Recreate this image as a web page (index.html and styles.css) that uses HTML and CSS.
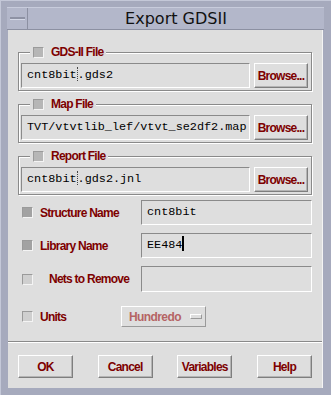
FILE: index.html
```html
<!DOCTYPE html>
<html lang="en">
<head>
  <meta charset="UTF-8">
  <title>Export GDSII</title>
  <link rel="stylesheet" href="styles.css">
</head>
<body>
  <div class="window">
    <!-- Title bar -->
    <div class="titlebar">
      <div class="menu-btn"><span class="bar"></span></div>
      <div class="title">Export GDSII</div>
    </div>

    <div class="content">
      <!-- File groups -->
      <fieldset class="group">
        <legend><span class="check"></span><span class="label">GDS-II File</span></legend>
        <div class="file-row">
          <div class="field">cnt8bit<span class="caret-dim"></span>.gds2</div>
          <button class="btn">Browse...</button>
        </div>
      </fieldset>
      <fieldset class="group">
        <legend><span class="check"></span><span class="label">Map File</span></legend>
        <div class="file-row">
          <div class="field">TVT/vtvtlib_lef/vtvt_se2df2.map</div>
          <button class="btn">Browse...</button>
        </div>
      </fieldset>
      <fieldset class="group">
        <legend><span class="check"></span><span class="label">Report File</span></legend>
        <div class="file-row">
          <div class="field">cnt8bit<span class="caret-dim"></span>.gds2.jnl</div>
          <button class="btn">Browse...</button>
        </div>
      </fieldset>

      <!-- Options -->
      <div class="rows">
        <div class="row">
          <span class="check on"></span>
          <span class="label">Structure Name</span>
          <div class="field">cnt8bit</div>
        </div>
        <div class="row">
          <span class="check on"></span>
          <span class="label">Library Name</span>
          <div class="field">EE484<span class="caret"></span></div>
        </div>
        <div class="row tall">
          <span class="check off"></span>
          <span class="label indent">Nets to Remove</span>
          <div class="field"></div>
        </div>
        <div class="units-row">
          <span class="check off"></span>
          <span class="label">Units</span>
          <div class="option-menu"><span class="option-text">Hundredo</span><span class="option-mark"></span></div>
        </div>
      </div>

      <div class="separator"></div>

      <div class="actions">
        <button class="btn action">OK</button>
        <button class="btn action">Cancel</button>
        <button class="btn action">Variables</button>
        <button class="btn action">Help</button>
      </div>
    </div>
  </div>
</body>
</html>
```

FILE: styles.css
```css
:root {
  --frame: #a6aabd;
  --title-bg: #b3b7ca;
  --panel: #dedede;
  --dark: #8a8a8a;
  --light: #ffffff;
  --label: #7d0000;
}
* { box-sizing: border-box; }
body {
  margin: 0;
  background: var(--frame);
}
.window {
  width: 331px;
  height: 395px;
  padding: 6px 8px 7px 7px;
  background: var(--frame);
  border-top: 1px solid #c4c8d8;
  border-left: 1px solid #c4c8d8;
  display: flex;
  flex-direction: column;
}

/* title bar */
.titlebar {
  height: 23px;
  display: flex;
  background: var(--title-bg);
  border-top: 1px solid #c8ccdc;
  border-bottom: 1px solid #8c90a2;
  margin-left: -1px;
  margin-right: -1px;
}
.menu-btn {
  width: 21px;
  border-right: 1px solid #8c90a2;
  display: flex;
  align-items: center;
  justify-content: center;
}
.menu-btn .bar {
  width: 15px;
  height: 3px;
  background: #8e92a4;
  border-bottom: 1px solid #d4d8e6;
}
.title {
  flex: 1;
  text-align: center;
  font-family: "DejaVu Sans", sans-serif;
  font-size: 16px;
  line-height: 22px;
  color: #111;
}

/* dialog body */
.content {
  flex: 1;
  background: var(--panel);
  border-right: 1px solid #f4f4f4;
  padding: 16px 10px 0 10px;
  display: flex;
  flex-direction: column;
}
.label {
  font-family: "Liberation Sans", Arial, sans-serif;
  font-weight: bold;
  font-size: 12px;
  letter-spacing: -0.75px;
  color: var(--label);
  white-space: nowrap;
}
.check {
  display: inline-block;
  width: 11px;
  height: 11px;
  background: #b6b6b6;
  border: 1px solid;
  border-color: #9a9a9a #f4f4f4 #f4f4f4 #9a9a9a;
}
.check.on { background: #a2a2a2; }
.check.off { background: #cfcfcf; }

.group {
  margin: 0 0 7px 0;
  padding: 5px 3px 2px 2px;
  border: 1px solid var(--dark);
  box-shadow: inset 1px 1px 0 var(--light), 1px 1px 0 var(--light);
}
.group legend {
  margin-left: 9px;
  padding: 0 3px;
  height: 12px;
  display: flex;
  align-items: center;
  gap: 7px;
  background: var(--panel);
}
.file-row {
  display: flex;
  gap: 4px;
}
.field {
  height: 25px;
  flex: 1;
  min-width: 0;
  overflow: hidden;
  padding-left: 5px;
  border: 1px solid;
  border-color: var(--dark) var(--light) var(--light) var(--dark);
  font-family: "Liberation Mono", monospace;
  font-size: 11.8px;
  line-height: 23px;
  color: #000;
  white-space: nowrap;
}
.caret-dim {
  display: inline-block;
  width: 0;
  height: 14px;
  vertical-align: -3px;
  border-left: 1px dotted #444;
}
.caret {
  display: inline-block;
  width: 0;
  height: 15px;
  vertical-align: -3px;
  border-left: 2px solid #000;
}
.btn {
  margin: 0;
  padding: 0;
  height: 25px;
  width: 54px;
  background: var(--panel);
  border: 1px solid;
  border-color: var(--light) #7e7e7e #7e7e7e var(--light);
  box-shadow: inset -1px -1px 0 #b4b4b4;
  font-family: "Liberation Sans", Arial, sans-serif;
  font-weight: bold;
  font-size: 12px;
  letter-spacing: -0.75px;
  color: var(--label);
}

/* option rows */
.rows {
  margin-top: -2px;
  padding-left: 4px;
  display: flex;
  flex-direction: column;
  gap: 8px;
}
.row {
  display: grid;
  grid-template-columns: 11px 94px 1fr;
  column-gap: 7px;
  align-items: center;
}
.row.tall .field { height: 26px; }
.label.indent { padding-left: 9px; }
.units-row {
  margin-top: 6px;
  display: grid;
  grid-template-columns: 11px 74px auto;
  column-gap: 7px;
  align-items: center;
}
.option-menu {
  width: 85px;
  height: 21px;
  display: flex;
  align-items: center;
  gap: 9px;
  padding-left: 7px;
  border: 1px solid;
  border-color: var(--light) #9a9a9a #9a9a9a var(--light);
}
.option-text {
  font-family: "Liberation Sans", Arial, sans-serif;
  font-weight: bold;
  font-size: 12px;
  letter-spacing: -0.6px;
  color: #b56464;
}
.option-mark {
  width: 12px;
  height: 5px;
  border: 1px solid;
  border-color: var(--light) #9a9a9a #9a9a9a var(--light);
}

.separator {
  margin: 14px -10px 0 -10px;
  border-top: 1px solid var(--dark);
  border-bottom: 1px solid var(--light);
}
.actions {
  display: flex;
  justify-content: space-between;
  padding-top: 12px;
}
.btn.action {
  width: 55px;
  height: 23px;
}
```
